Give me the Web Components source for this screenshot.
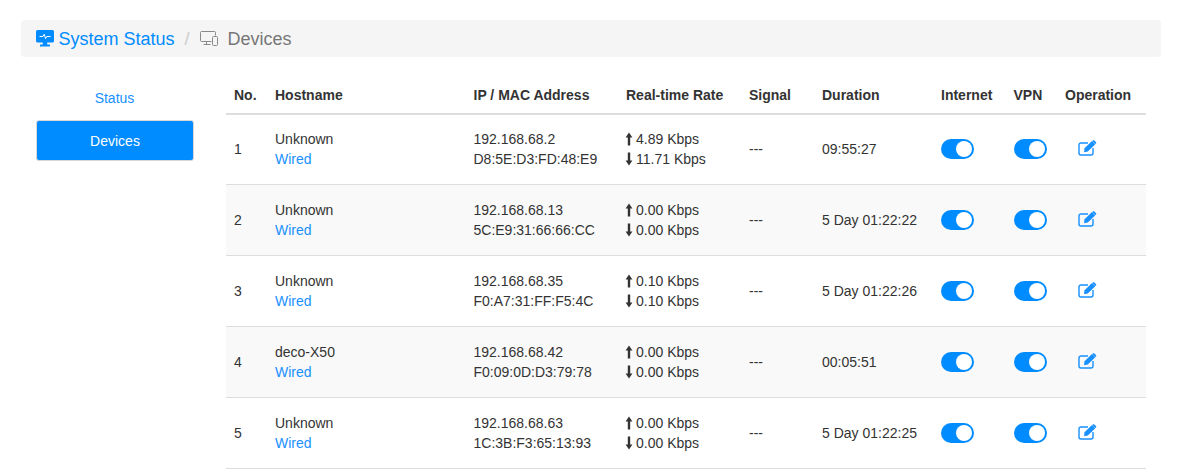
<!DOCTYPE html>
<html>
<head>
<meta charset="utf-8">
<title>Devices</title>
<style>
  html, body { margin: 0; height: 474px; overflow: hidden; background: #fff; }
  body { font-family: "Liberation Sans", Arial, sans-serif; font-size: 14px; color: #333; }
</style>
</head>
<body>
<status-page></status-page>
<script>
const datos = [
  { no: 1, host: 'Unknown', ip: '192.168.68.2', mac: 'D8:5E:D3:FD:48:E9', up: '4.89 Kbps', down: '11.71 Kbps', dur: '09:55:27' },
  { no: 2, host: 'Unknown', ip: '192.168.68.13', mac: '5C:E9:31:66:66:CC', up: '0.00 Kbps', down: '0.00 Kbps', dur: '5 Day 01:22:22' },
  { no: 3, host: 'Unknown', ip: '192.168.68.35', mac: 'F0:A7:31:FF:F5:4C', up: '0.10 Kbps', down: '0.10 Kbps', dur: '5 Day 01:22:26' },
  { no: 4, host: 'deco-X50', ip: '192.168.68.42', mac: 'F0:09:0D:D3:79:78', up: '0.00 Kbps', down: '0.00 Kbps', dur: '00:05:51' },
  { no: 5, host: 'Unknown', ip: '192.168.68.63', mac: '1C:3B:F3:65:13:93', up: '0.00 Kbps', down: '0.00 Kbps', dur: '5 Day 01:22:25' },
];

const COLS = '41px 198.5px 152.5px 123px 73px 119px 72.5px 51.5px 89px';

class BreadCrumb extends HTMLElement {
  constructor() {
    super();
    this.attachShadow({ mode: 'open' }).innerHTML = `
      <style>
        :host { display: flex; align-items: center; height: 37px; box-sizing: border-box; padding: 2px 0 0 15px; background: #f5f5f5; border-radius: 4px; font-size: 18px; color: #777; }
        a { color: #008cff; display: flex; align-items: center; gap: 4.5px; }
        .sep { color: #ccc; margin: 0 10px; }
        svg { display: block; margin-top: -2px; }
        .cur { display: flex; align-items: center; gap: 10px; }
      </style>
      <a>
        <svg width="18" height="17" viewBox="0 0 18 17">
          <rect x="0" y="0" width="18" height="12.5" rx="1.500" fill="#008cff"/>
          <path d="M3.500 6.500H7L8.200 4.200 9.600 8.600 10.800 6.500H14.500" fill="none" stroke="#fff" stroke-width="1"/>
          <path d="M6.800 12h4.400v3H6.800zM4 14.500h10V16.500H4z" fill="#008cff"/>
        </svg>
        System Status
      </a>
      <span class="sep">/</span>
      <span class="cur">
        <svg width="18" height="15" viewBox="0 0 18 15" fill="none" stroke="#8a8a8a" stroke-width="1">
          <path d="M11.500 10.500H1.500a1 1 0 0 1-1-1V1.500a1 1 0 0 1 1-1h13a1 1 0 0 1 1 1V4.500"/>
          <path d="M6.500 10.500v3M3.500 13.500h7"/>
          <rect x="12.500" y="5.500" width="5" height="9" rx="1"/>
        </svg>
        Devices
      </span>`;
  }
}

class SideNav extends HTMLElement {
  constructor() {
    super();
    this.attachShadow({ mode: 'open' }).innerHTML = `
      <style>
        :host { display: block; width: 158px; }
        div { height: 41px; display: flex; align-items: center; justify-content: center; color: #1890ff; margin-bottom: 2px; padding-right: 1px; }
        .on { background: #008cff; color: #fff; border: 1px solid #d8d8d8; border-radius: 3px; box-sizing: border-box; padding-right: 0; }
      </style>
      <div>Status</div>
      <div class="on">Devices</div>`;
  }
}

class ToggleSwitch extends HTMLElement {
  constructor() {
    super();
    this.attachShadow({ mode: 'open' }).innerHTML = `
      <style>
        :host { display: block; width: 33px; height: 20px; border-radius: 10px; background: #008cff; position: relative; }
        i { position: absolute; right: 2px; top: 2px; width: 16px; height: 16px; border-radius: 50%; background: #fff; }
      </style>
      <i></i>`;
  }
}

class DeviceHead extends HTMLElement {
  constructor() {
    super();
    const t = ['No.', 'Hostname', 'IP / MAC Address', 'Real-time Rate', 'Signal', 'Duration', 'Internet', 'VPN', 'Operation'];
    this.attachShadow({ mode: 'open' }).innerHTML = `
      <style>
        :host { display: grid; grid-template-columns: ${COLS}; height: 36px; align-items: center; border-bottom: 2px solid #ddd; font-weight: bold; color: #333; }
        span { padding-left: 8px; white-space: nowrap; }
      </style>
      ${t.map(x => `<span>${x}</span>`).join('')}`;
  }
}

class DeviceRow extends HTMLElement {
  constructor() {
    super();
    this.attachShadow({ mode: 'open' });
  }

  connectedCallback() {
    const d = datos[this.getAttribute('index')];
    this.shadowRoot.innerHTML = `
      <style>
        :host { display: grid; grid-template-columns: ${COLS}; height: 70px; align-items: center; border-bottom: 1px solid #ddd; color: #333; }
        :host(:first-of-type) { height: 68px; padding-bottom: 1px; }
        :host(:nth-of-type(even)) { background: #f9f9f9; }
        .c { padding-left: 8px; line-height: 20px; white-space: nowrap; }
        .wired { color: #1890ff; }
        .r { display: flex; align-items: center; gap: 3px; margin-left: -1px; }
        svg { display: block; }
        .edit { margin: -1px 0 1px; }
      </style>
      <div class="c">${d.no}</div>
      <div class="c">${d.host}<br><span class="wired">Wired</span></div>
      <div class="c">${d.ip}<br>${d.mac}</div>
      <div class="c">
        <div class="r"><svg width="8" height="14" viewBox="0 0 8 14"><path d="M4 0.500 7.400 5.500H5.200V13.500H2.800V5.500H0.600z" fill="#333"/></svg>${d.up}</div>
        <div class="r"><svg width="8" height="14" viewBox="0 0 8 14"><path d="M4 13.500 7.400 8.500H5.200V0.500H2.800V8.500H0.600z" fill="#333"/></svg>${d.down}</div>
      </div>
      <div class="c">---</div>
      <div class="c">${d.dur}</div>
      <div class="c"><toggle-switch></toggle-switch></div>
      <div class="c"><toggle-switch></toggle-switch></div>
      <div class="c" style="padding-left:21px">
        <svg class="edit" width="20" height="16" viewBox="0 0 20 16">
          <path d="M10 3H3a2 2 0 0 0-2 2v8a2 2 0 0 0 2 2h10a2 2 0 0 0 2-2V8" fill="none" stroke="#1890ff" stroke-width="1.400"/>
          <path d="M6.500 8.300 14 .9 17.300 4.200 9.800 11.600 6 12.200z" fill="#1890ff"/>
          <path d="M15 0.400a1 1 0 0 1 1.300 0l1.700 1.700a1 1 0 0 1 0 1.300l-.7.700L14.200 1z" fill="#1890ff"/>
        </svg>
      </div>`;
  }
}

class StatusPage extends HTMLElement {
  constructor() {
    super();
    this.attachShadow({ mode: 'open' }).innerHTML = `
      <style>
        :host { display: block; padding: 20px 35px 0 21px; }
        .main { display: flex; margin-top: 20px; padding-left: 15px; gap: 32px; }
        .tabla { width: 920px; }
      </style>
      <bread-crumb></bread-crumb>
      <div class="main">
        <side-nav></side-nav>
        <div class="tabla">
          <device-head></device-head>
          ${datos.map((d, i) => `<device-row index="${i}"></device-row>`).join('')}
        </div>
      </div>`;
  }
}

customElements.define('bread-crumb', BreadCrumb);
customElements.define('side-nav', SideNav);
customElements.define('toggle-switch', ToggleSwitch);
customElements.define('device-head', DeviceHead);
customElements.define('device-row', DeviceRow);
customElements.define('status-page', StatusPage);
</script>
</body>
</html>
